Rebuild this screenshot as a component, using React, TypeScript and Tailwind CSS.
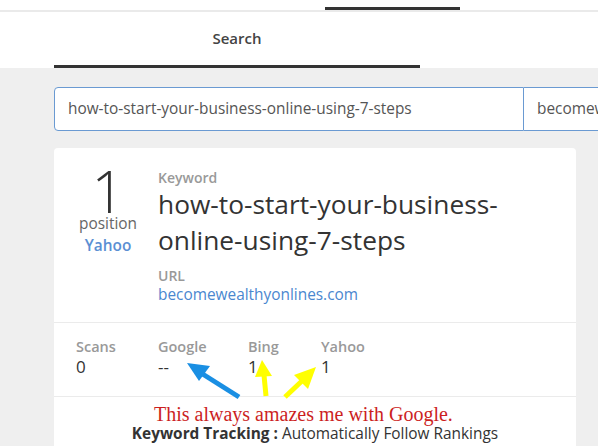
import React from "react";

export default function App() {
  const font = { fontFamily: '"Open Sans", "Noto Sans", sans-serif' };
  const stats: [string, string, string][] = [
    ["Scans", "0", "w-[82px]"],
    ["Google", "--", "w-[90px]"],
    ["Bing", "1", "w-[73px]"],
    ["Yahoo", "1", "w-[60px]"],
  ];
  return (
    <div className="relative w-[598px] h-[446px] overflow-hidden bg-[#efefef]" style={font}>
      {/* top strip */}
      <div className="h-[10px] bg-white flex">
        <div className="ml-[325px] mt-[7px] w-[135px] h-[3px] bg-[#333]" />
      </div>
      <div className="h-[2px] bg-[#eaeaea]" />
      {/* nav */}
      <div className="h-[56px] bg-white flex">
        <div className="ml-[54px] w-[366px] h-[56px] border-b-[3px] border-[#333] flex items-center justify-center text-[15px] font-semibold text-[#444]">
          Search
        </div>
      </div>
      {/* inputs */}
      <div className="mt-[19px] ml-[54px] flex h-[44px]">
        <div className="w-[470px] shrink-0 bg-white border border-[#6a9ad2] rounded-l-[4px] flex items-center pl-[13px] text-[15.4px] text-[#555]">
          how-to-start-your-business-online-using-7-steps
        </div>
        <div className="w-[200px] shrink-0 whitespace-nowrap bg-white border border-l-0 border-[#6a9ad2] flex items-center pl-[13px] text-[15.4px] text-[#555]">
          becomewealthyonlines.com
        </div>
      </div>
      {/* card */}
      <div className="relative mt-[17px] ml-[54px] w-[522px] h-[320px] bg-white rounded-[4px]">
        <div className="flex pl-[20px] pt-[14px] h-[174px]">
          <div className="w-[68px] flex flex-col items-center pt-[5px]">
            <div className="text-[58px] font-light leading-[47px] text-[#333]">1</div>
            <div className="text-[15.4px] leading-[20px] text-[#666]">position</div>
            <div className="text-[15.4px] leading-[20px] font-semibold text-[#5b8fd3] mt-[2px]">Yahoo</div>
          </div>
          <div className="ml-[16px] flex flex-col">
            <div className="text-[14px] leading-[20px] font-semibold text-[#999] mt-[6px]">Keyword</div>
            <div className="text-[26.3px] leading-[36px] text-[#333] w-[360px] -mt-[2px]">
              how-to-start-your-business-online-using-7-steps
            </div>
            <div className="text-[14px] leading-[20px] font-semibold text-[#999] mt-[8px]">URL</div>
            <div className="text-[15.4px] leading-[20px] text-[#4a87cf] -mt-[1px]">becomewealthyonlines.com</div>
          </div>
        </div>
        <div className="h-px bg-[#ebebeb]" />
        <div className="flex pl-[22px] pt-[14px] h-[73px]">
          {stats.map(([l, v, w]) => (
            <div key={l} className={`flex flex-col ${w}`}>
              <div className="text-[14.5px] leading-[20px] font-semibold text-[#999]">{l}</div>
              <div className="text-[17px] leading-[19px] text-[#333]">{v}</div>
            </div>
          ))}
        </div>
        <div className="h-px bg-[#ebebeb]" />
        <div className="pt-[27px] text-center text-[15.4px] leading-[20px] text-[#333]">
          <span className="font-bold">Keyword Tracking :</span> Automatically Follow Rankings
        </div>
      </div>
      {/* annotations */}
      <div
        className="absolute left-[154px] top-[403px] text-[20px] leading-[22px] text-[#cc1f1f] whitespace-nowrap"
        style={{ fontFamily: '"Liberation Serif", serif' }}
      >
        This always amazes me with Google.
      </div>
      <svg className="absolute left-0 top-0" width="598" height="446" viewBox="0 0 598 446">
        <line x1="239" y1="397" x2="201" y2="373" stroke="#1a8fe3" strokeWidth="5" />
        <polygon points="187,363 210,366 199,381" fill="#1a8fe3" />
        <line x1="266" y1="396" x2="264" y2="375" stroke="#ffff00" strokeWidth="5" />
        <polygon points="262,360 255,377 272,376" fill="#ffff00" />
        <line x1="285" y1="397" x2="303" y2="380" stroke="#ffff00" strokeWidth="5" />
        <polygon points="316,367 294,375 308,389" fill="#ffff00" />
      </svg>
    </div>
  );
}
